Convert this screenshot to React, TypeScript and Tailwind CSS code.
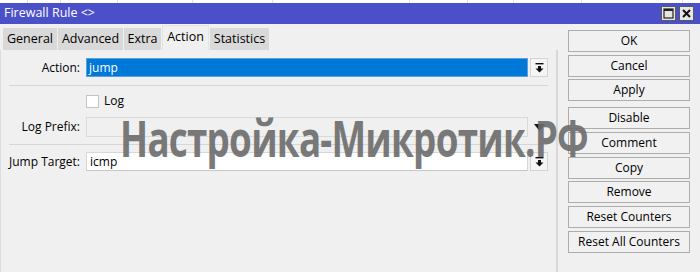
import React from "react";

function DropIcon() {
  return (
    <svg width="9" height="10" viewBox="0 0 9 10" className="block">
      <rect x="0.5" y="0" width="8" height="1.4" fill="#111" />
      <rect x="3" y="3" width="3" height="3" fill="#111" />
      <polygon points="0.5,5.5 8.5,5.5 4.5,9.5" fill="#111" />
    </svg>
  );
}

function DropBtn() {
  return (
    <div className="ml-[2px] w-[18px] self-stretch border border-[#d4d4d4] bg-[#f5f5f5] flex items-center justify-center">
      <DropIcon />
    </div>
  );
}

const buttons = ["OK", "Cancel", "Apply", "Disable", "Comment", "Copy", "Remove", "Reset Counters", "Reset All Counters"];

export default function App() {
  return (
    <div
      className="w-[700px] h-[272px] overflow-hidden bg-[#f0f0f0] relative flex flex-col text-[12px] text-black leading-none"
      style={{ fontFamily: '"Open Sans", "Noto Sans", sans-serif' }}
    >
      {/* underlying table strip */}
      <div className="h-[3px] bg-white flex">
        <div className="w-[28px] border-r border-[#e2e2e2]" />
        <div className="w-[33px] border-r border-[#e2e2e2]" />
        <div className="w-[57px] border-r border-[#e2e2e2]" />
        <div className="w-[75px] border-r border-[#e2e2e2]" />
        <div className="w-[80px] border-r border-[#e2e2e2]" />
        <div className="w-[137px] border-r border-[#e2e2e2]" />
        <div className="w-[58px] border-r border-[#e2e2e2]" />
        <div className="w-[46px] border-r border-[#e2e2e2]" />
        <div className="w-[68px] border-r border-[#e2e2e2]" />
        <div className="w-[101px] border-r border-[#e2e2e2]" />
      </div>

      {/* title bar */}
      <div className="h-[21px] bg-[#4b50c9] flex items-center justify-between pl-[4px] pr-[6px]">
        <span className="text-white text-[12.5px]">Firewall Rule &lt;&gt;</span>
        <div className="flex gap-[3px]">
          <div className="w-[15px] h-[15px] bg-[#e6e6e6] border border-[#5a5a5a] flex items-center justify-center">
            <svg width="11" height="11" viewBox="0 0 11 11">
              <rect x="1" y="1" width="9" height="9" fill="none" stroke="#222" strokeWidth="1.2" />
              <rect x="1" y="1" width="9" height="2" fill="#222" />
            </svg>
          </div>
          <div className="w-[15px] h-[15px] bg-[#e6e6e6] border border-[#5a5a5a] flex items-center justify-center">
            <svg width="11" height="11" viewBox="0 0 11 11">
              <path d="M2 2 L9 9 M9 2 L2 9" stroke="#111" strokeWidth="2" />
            </svg>
          </div>
        </div>
      </div>

      <div className="flex flex-1">
        {/* left: tabs + form */}
        <div className="w-[558px] flex flex-col">
          <div className="h-[26px] flex items-end pl-[3px] gap-[1px] text-[12.5px]">
            <div className="w-[54px] h-[22px] bg-[#d9d9d9] flex items-center justify-center">General</div>
            <div className="w-[65px] h-[22px] bg-[#d9d9d9] flex items-center justify-center">Advanced</div>
            <div className="w-[37px] h-[22px] bg-[#d9d9d9] flex items-center justify-center">Extra</div>
            <div className="w-[47px] h-[25px] bg-[#f0f0f0] border-l border-r border-t border-[#e4e4e4] flex items-center justify-center pb-[2px]">Action</div>
            <div className="w-[59px] h-[22px] bg-[#d9d9d9] flex items-center justify-center">Statistics</div>
          </div>

          <div className="flex-1 border-l border-[#dcdcdc] border-r-2 border-r-[#d8d8d8] flex flex-col pt-[8px] pr-[8px]">
            {/* Action */}
            <div className="flex h-[19px] items-stretch">
              <div className="w-[80px] pr-[1px] text-right flex items-center justify-end">Action:</div>
              <div className="ml-[5px] flex-1 bg-[#0078d7] border border-[#5a9fe0] text-white flex items-center pl-[2px]">jump</div>
              <DropBtn />
            </div>

            <div className="mt-[8px] ml-[8px] h-[1px] bg-[#d6d6d6]" />

            {/* Log */}
            <div className="mt-[8px] flex items-center h-[14px]">
              <div className="w-[85px]" />
              <div className="w-[13px] h-[13px] bg-white border border-[#c4c4c4]" />
              <span className="ml-[5px]">Log</span>
            </div>

            {/* Log Prefix */}
            <div className="mt-[9px] flex h-[20px] items-stretch">
              <div className="w-[80px] pr-[1px] text-right flex items-center justify-end">Log Prefix:</div>
              <div className="ml-[5px] flex-1 bg-[#f0f0f0] border border-[#dadada]" />
              <div className="ml-[2px] w-[18px] flex items-center justify-center">
                <svg width="11" height="7" viewBox="0 0 11 7">
                  <polygon points="0,0 11,0 5.5,7" fill="#111" />
                </svg>
              </div>
            </div>

            <div className="mt-[7px] ml-[8px] h-[1px] bg-[#d6d6d6]" />

            {/* Jump Target */}
            <div className="mt-[7px] flex h-[19px] items-stretch">
              <div className="w-[80px] pr-[1px] text-right flex items-center justify-end">Jump Target:</div>
              <div className="ml-[5px] flex-1 bg-white border border-[#d8d8d8] border-b-[#c8c8c8] flex items-center pl-[3px]">icmp</div>
              <DropBtn />
            </div>
          </div>
        </div>

        {/* right: buttons */}
        <div className="flex-1 pl-[10px] pt-[6px] flex flex-col">
          {buttons.map((b, i) => (
            <div
              key={b}
              className={`w-[122px] h-[22px] bg-[#f1f1f1] border border-[#adadad] flex items-center justify-center ${i === 0 ? "" : i === 3 ? "mt-[6px]" : "mt-[2.7px]"}`}
            >
              {b}
            </div>
          ))}
        </div>
      </div>

      {/* watermark */}
      <div
        className="absolute left-[120px] top-[113px] text-[50px] font-bold text-[#6c6c6c] opacity-90 whitespace-nowrap pointer-events-none leading-none tracking-[-1px] origin-left scale-x-[0.735]"
        style={{ fontFamily: '"Open Sans", sans-serif' }}
      >
        Настройка-Микротик.РФ
      </div>
    </div>
  );
}
